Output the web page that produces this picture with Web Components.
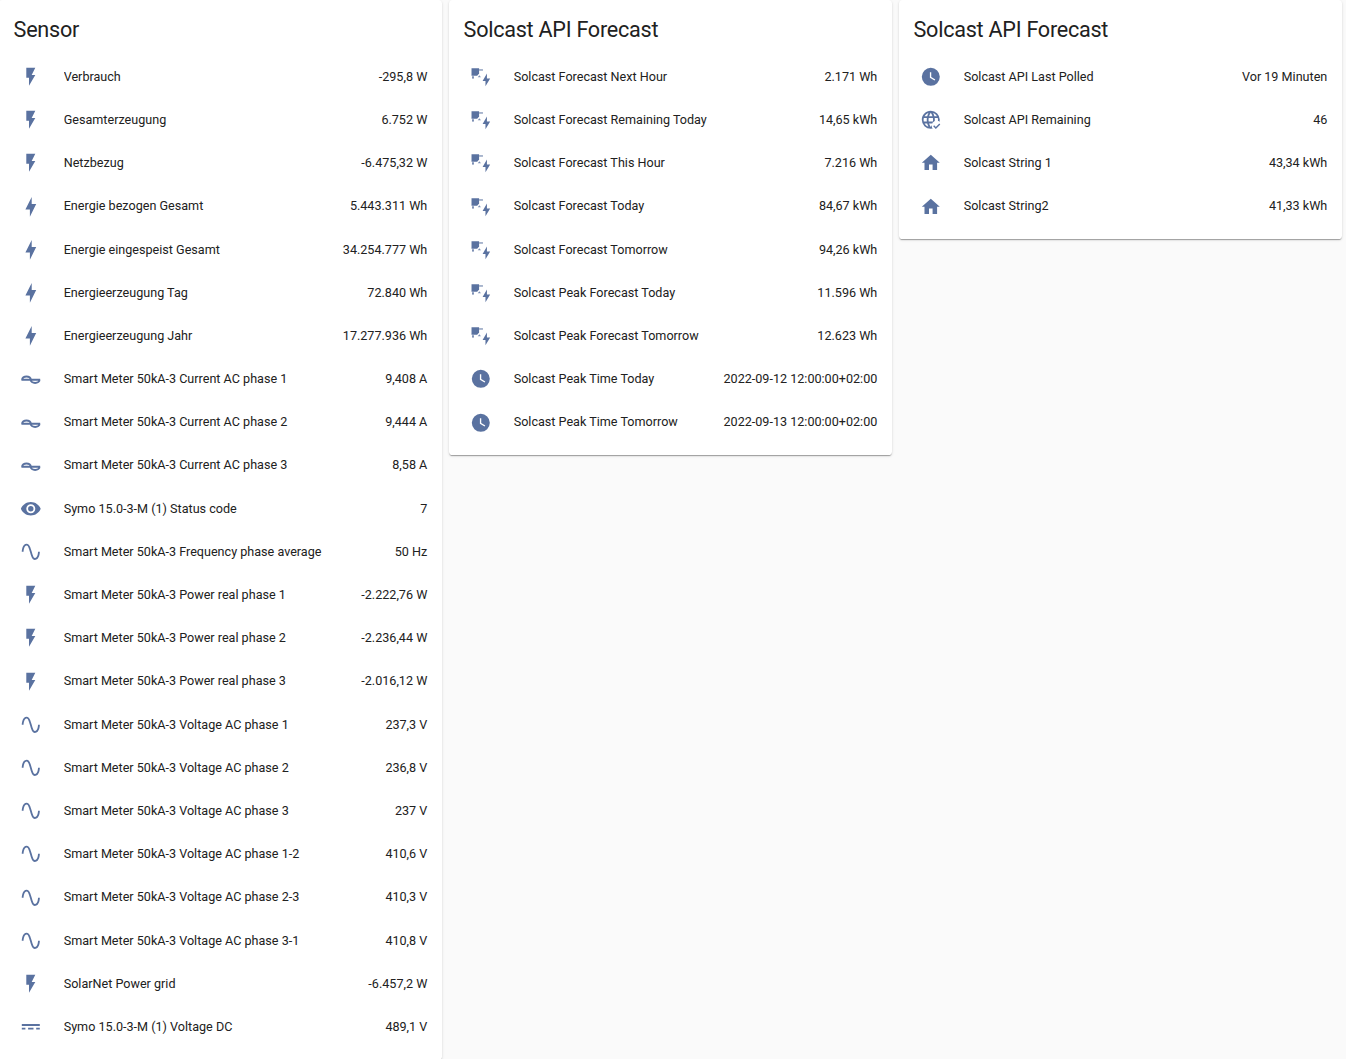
<!DOCTYPE html>
<html lang="de">
<head>
<meta charset="utf-8">
<title>Sensor</title>
<style>
  body { margin: 0; background: #fafafa; font-family: Roboto, "Liberation Sans", sans-serif; color: #212121; overflow: hidden; }
</style>
</head>
<body>
<dash-view>
  <entity-card heading="Sensor">
    <entity-row icon="flash" state="-295,8 W">Verbrauch</entity-row>
    <entity-row icon="flash" state="6.752 W">Gesamterzeugung</entity-row>
    <entity-row icon="flash" state="-6.475,32 W">Netzbezug</entity-row>
    <entity-row icon="bolt" state="5.443.311 Wh">Energie bezogen Gesamt</entity-row>
    <entity-row icon="bolt" state="34.254.777 Wh">Energie eingespeist Gesamt</entity-row>
    <entity-row icon="bolt" state="72.840 Wh">Energieerzeugung Tag</entity-row>
    <entity-row icon="bolt" state="17.277.936 Wh">Energieerzeugung Jahr</entity-row>
    <entity-row icon="ac" state="9,408 A">Smart Meter 50kA-3 Current AC phase 1</entity-row>
    <entity-row icon="ac" state="9,444 A">Smart Meter 50kA-3 Current AC phase 2</entity-row>
    <entity-row icon="ac" state="8,58 A">Smart Meter 50kA-3 Current AC phase 3</entity-row>
    <entity-row icon="eye" state="7">Symo 15.0-3-M (1) Status code</entity-row>
    <entity-row icon="sine" state="50 Hz">Smart Meter 50kA-3 Frequency phase average</entity-row>
    <entity-row icon="flash" state="-2.222,76 W">Smart Meter 50kA-3 Power real phase 1</entity-row>
    <entity-row icon="flash" state="-2.236,44 W">Smart Meter 50kA-3 Power real phase 2</entity-row>
    <entity-row icon="flash" state="-2.016,12 W">Smart Meter 50kA-3 Power real phase 3</entity-row>
    <entity-row icon="sine" state="237,3 V">Smart Meter 50kA-3 Voltage AC phase 1</entity-row>
    <entity-row icon="sine" state="236,8 V">Smart Meter 50kA-3 Voltage AC phase 2</entity-row>
    <entity-row icon="sine" state="237 V">Smart Meter 50kA-3 Voltage AC phase 3</entity-row>
    <entity-row icon="sine" state="410,6 V">Smart Meter 50kA-3 Voltage AC phase 1-2</entity-row>
    <entity-row icon="sine" state="410,3 V">Smart Meter 50kA-3 Voltage AC phase 2-3</entity-row>
    <entity-row icon="sine" state="410,8 V">Smart Meter 50kA-3 Voltage AC phase 3-1</entity-row>
    <entity-row icon="flash" state="-6.457,2 W">SolarNet Power grid</entity-row>
    <entity-row icon="dc" state="489,1 V">Symo 15.0-3-M (1) Voltage DC</entity-row>
  </entity-card>
  <entity-card heading="Solcast API Forecast">
    <entity-row icon="solar" state="2.171 Wh">Solcast Forecast Next Hour</entity-row>
    <entity-row icon="solar" state="14,65 kWh">Solcast Forecast Remaining Today</entity-row>
    <entity-row icon="solar" state="7.216 Wh">Solcast Forecast This Hour</entity-row>
    <entity-row icon="solar" state="84,67 kWh">Solcast Forecast Today</entity-row>
    <entity-row icon="solar" state="94,26 kWh">Solcast Forecast Tomorrow</entity-row>
    <entity-row icon="solar" state="11.596 Wh">Solcast Peak Forecast Today</entity-row>
    <entity-row icon="solar" state="12.623 Wh">Solcast Peak Forecast Tomorrow</entity-row>
    <entity-row icon="clock" state="2022-09-12 12:00:00+02:00">Solcast Peak Time Today</entity-row>
    <entity-row icon="clock" state="2022-09-13 12:00:00+02:00">Solcast Peak Time Tomorrow</entity-row>
  </entity-card>
  <entity-card heading="Solcast API Forecast">
    <entity-row icon="clock" state="Vor 19 Minuten">Solcast API Last Polled</entity-row>
    <entity-row icon="web" state="46">Solcast API Remaining</entity-row>
    <entity-row icon="home" state="43,34 kWh">Solcast String 1</entity-row>
    <entity-row icon="home" state="41,33 kWh">Solcast String2</entity-row>
  </entity-card>
</dash-view>

<script>
// mdi style icons, 24 unit viewbox
const ICONS = {
  flash: '<path d="M7,2V13H10V22L17,10H13L17,2H7Z"/>',
  bolt: '<path d="M11 15H6L13 1V9H18L11 23V15Z"/>',
  ac: '<path d="M2.4 13A4.8 3.6 0 0 1 12 13A4.8 3.6 0 0 0 21.6 13M1.6 13H22.4" fill="none" stroke="currentColor" stroke-width="2.3"/>',
  eye: '<path d="M12,9A3,3 0 0,0 9,12A3,3 0 0,0 12,15A3,3 0 0,0 15,12A3,3 0 0,0 12,9M12,17A5,5 0 0,1 7,12A5,5 0 0,1 12,7A5,5 0 0,1 17,12A5,5 0 0,1 12,17M12,4.5C7,4.5 2.73,7.61 1,12C2.73,16.39 7,19.5 12,19.5C17,19.5 21.27,16.39 23,12C21.27,7.61 17,4.5 12,4.5Z"/>',
  sine: '<path d="M16.5,21C13.5,21 12.31,16.76 11.05,12.28C10.14,9.04 9,5 7.5,5C4.11,5 4,11.93 4,12H2C2,11.63 2.06,3 7.5,3C10.5,3 11.71,7.25 12.97,11.74C13.83,14.8 15,19 16.5,19C19.94,19 20.03,12.07 20.03,12H22.03C22.03,12.37 21.97,21 16.5,21Z"/>',
  dc: '<path d="M2,9H22V11H2V9M2,13H6V15H2V13M9,13H15V15H9V13M18,13H22V15H18V13Z"/>',
  clock: '<path d="M12,2A10,10 0 0,0 2,12A10,10 0 0,0 12,22A10,10 0 0,0 22,12A10,10 0 0,0 12,2M16.2,16.2L11,13V7H12.5V12.2L17,14.9L16.2,16.2Z"/>',
  home: '<path d="M10,20V14H14V20H19V12H22L12,3L2,12H5V20H10Z"/>',
  web: '<path d="M16.36,14C16.44,13.34 16.5,12.68 16.5,12C16.5,11.32 16.44,10.66 16.36,10H19.74C19.9,10.64 20,11.31 20,12C20,12.69 19.9,13.36 19.74,14M14.59,19.56C15.19,18.45 15.65,17.25 15.97,16H18.92C17.96,17.65 16.43,18.93 14.59,19.56M14.34,14H9.66C9.56,13.34 9.5,12.68 9.5,12C9.5,11.32 9.56,10.65 9.66,10H14.34C14.43,10.65 14.5,11.32 14.5,12C14.5,12.68 14.43,13.34 14.34,14M12,19.96C11.17,18.76 10.5,17.43 10.09,16H13.91C13.5,17.43 12.83,18.76 12,19.96M8,8H5.08C6.03,6.34 7.57,5.06 9.4,4.44C8.8,5.55 8.35,6.75 8,8M5.08,16H8C8.35,17.25 8.8,18.45 9.4,19.56C7.57,18.93 6.03,17.65 5.08,16M4.26,14C4.1,13.36 4,12.69 4,12C4,11.31 4.1,10.64 4.26,10H7.64C7.56,10.66 7.5,11.32 7.5,12C7.5,12.68 7.56,13.34 7.64,14M12,4.03C12.83,5.23 13.5,6.57 13.91,8H10.09C10.5,6.57 11.17,5.23 12,4.03M18.92,8H15.97C15.65,6.75 15.19,5.55 14.59,4.44C16.43,5.07 17.96,6.34 18.92,8M12,2C6.47,2 2,6.5 2,12A10,10 0 0,0 12,22A10,10 0 0,0 22,12A10,10 0 0,0 12,2Z"/><circle cx="18.5" cy="18.5" r="5.5" fill="#fff"/><path d="M15.2 18.6L17.6 21L22 16.6" fill="none" stroke="currentColor" stroke-width="1.6"/>',
  solar: '<path d="M1.7 2.4H10.1V8.2L8 10.7H1.7Z"/><path d="M10.1 3.6H14.4V5.2H10.1Z" opacity=".7"/><path d="M2.2 11.4H4.4V14H2.2Z" opacity=".8"/><path d="M8.6 12.4L10.4 10.2L12.2 12.4Z" opacity=".8"/><path d="M18.8 8.4L14 16.8H17.2V22.6L22.4 13.8H18.8Z"/>'
};

class MdiIcon extends HTMLElement {
  connectedCallback() {
    this.attachShadow({ mode: 'open' });
    this.shadowRoot.innerHTML = `
      <style>
        :host { display: block; width: 21.6px; height: 21.6px; margin: 1px 0 0 -0.8px; color: var(--icon-color, #5a72a0); }
        svg { display: block; width: 100%; height: 100%; fill: currentColor; }
      </style>
      <svg viewBox="0 0 24 24">${ICONS[this.getAttribute('name')] || ''}</svg>`;
  }
}
customElements.define('mdi-icon', MdiIcon);

class EntityRow extends HTMLElement {
  connectedCallback() {
    this.attachShadow({ mode: 'open' });
    this.shadowRoot.innerHTML = `
      <style>
        :host { display: flex; align-items: center; height: 36px; font-size: 12.6px; }
        .badge { flex: none; width: 36px; height: 36px; display: flex; align-items: center; justify-content: center; }
        .name { flex: 1; margin-left: 14.4px; white-space: nowrap; overflow: hidden; }
        .state { flex: none; text-align: right; margin-left: 14.4px; white-space: nowrap; }
      </style>
      <div class="badge"><mdi-icon name="${this.getAttribute('icon')}"></mdi-icon></div>
      <div class="name"><slot></slot></div>
      <div class="state">${this.getAttribute('state')}</div>`;
  }
}
customElements.define('entity-row', EntityRow);

class EntityCard extends HTMLElement {
  connectedCallback() {
    this.attachShadow({ mode: 'open' });
    this.shadowRoot.innerHTML = `
      <style>
        :host {
          display: block; background: #fff; border-radius: 3.6px;
          box-shadow: 0 2px 1px -1px rgba(0,0,0,.2), 0 1px 1px 0 rgba(0,0,0,.14), 0 1px 3px 0 rgba(0,0,0,.12);
        }
        h1 { margin: 0; padding: 12px 14.4px 10.31px 14.7px; font-size: 21.6px; line-height: 36px; font-weight: 400; letter-spacing: -0.012em; color: #212121; }
        .rows { display: flex; flex-direction: column; gap: 7.1875px; padding: 0 14.4px 15.3px; }
      </style>
      <h1>${this.getAttribute('heading')}</h1>
      <div class="rows"><slot></slot></div>`;
  }
}
customElements.define('entity-card', EntityCard);

class DashView extends HTMLElement {
  connectedCallback() {
    this.attachShadow({ mode: 'open' });
    this.shadowRoot.innerHTML = `
      <style>
        :host { display: grid; grid-template-columns: repeat(3, 442.8px); column-gap: 7.2px; align-items: start; margin-left: -1.1px; height: 1059px; }
      </style>
      <slot></slot>`;
  }
}
customElements.define('dash-view', DashView);
</script>
</body>
</html>
